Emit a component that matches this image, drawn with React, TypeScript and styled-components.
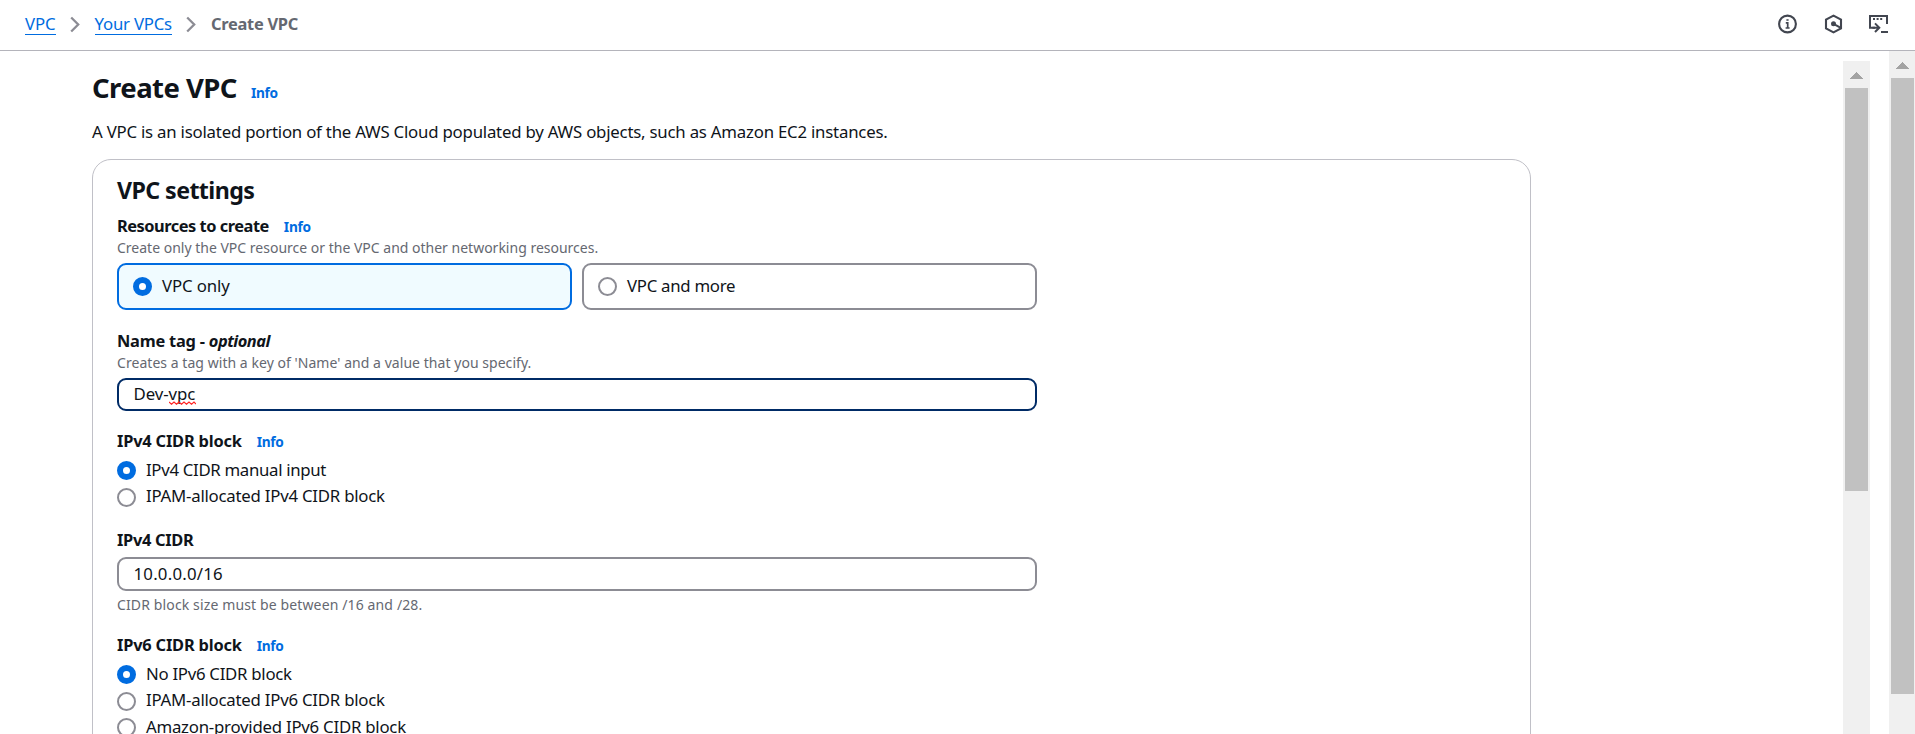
import React from 'react';
import styled, { createGlobalStyle } from 'styled-components';

const GlobalStyle = createGlobalStyle`
  * { box-sizing: border-box; }
  html, body { margin: 0; height: 734px; overflow: hidden; background: #fff; }
  body { font-family: 'Noto Sans', 'Open Sans', sans-serif; color: #0f141a; font-size: 16.8px; line-height: 24px; }
  h1, h2, p { margin: 0; }
`;

interface Spaced {
  $ls?: number;
}

const Page = styled.div`
  width: 1915px;
  height: 734px;
  display: flex;
  flex-direction: column;
  overflow: hidden;
`;

const TopBar = styled.header`
  flex: none;
  height: 51px;
  padding: 0 26px 2px 25px;
  border-bottom: 1px solid #b4b4bb;
  display: flex;
  align-items: center;
  justify-content: space-between;
`;

const Breadcrumbs = styled.nav`
  display: flex;
  align-items: center;
`;

const Crumb = styled.a<Spaced>`
  color: #006ce0;
  line-height: 20px;
  height: 21px;
  border-bottom: 1px solid #006ce0;
  letter-spacing: ${(p) => p.$ls ?? 0}px;
`;

const CurrentCrumb = styled.span`
  color: #656871;
  font-size: 16.4px;
  font-weight: 700;
  line-height: 20px;
  height: 21px;
  letter-spacing: -0.25px;
`;

const Separator = styled.svg`
  flex: none;
  width: 10px;
  height: 17px;
  margin: 0 15px 0 14px;
`;

const Tools = styled.div`
  display: flex;
  align-items: center;
  gap: 26px;
`;

const ToolIcon = styled.svg`
  width: 20px;
  height: 20px;
  display: block;
`;

const Main = styled.main`
  flex: 1;
  min-height: 0;
  display: flex;
`;

const Content = styled.section`
  width: 1843px;
  padding: 19px 0 0 92px;
  overflow: hidden;
`;

const TitleRow = styled.div`
  display: flex;
  align-items: baseline;
  height: 36px;
`;

const Title = styled.h1`
  font-size: 27.5px;
  line-height: 36px;
  font-weight: 700;
  letter-spacing: -0.55px;
  margin-right: 14px;
`;

const InfoLink = styled.a`
  color: #006ce0;
  font-size: 13.7px;
  line-height: 20px;
  font-weight: 700;
  letter-spacing: -0.3px;
`;

const Description = styled.p`
  margin-top: 14px;
  letter-spacing: -0.212px;
`;

const Card = styled.div`
  width: 1439px;
  height: 700px;
  margin-top: 15px;
  padding: 15px 24px;
  border: 1px solid #c0c0c7;
  border-radius: 19px;
`;

const CardTitle = styled.h2`
  font-size: 23.2px;
  line-height: 30px;
  font-weight: 700;
  letter-spacing: -0.58px;
  margin-bottom: 9px;
`;

const Field = styled.div<{ $gap: number }>`
  width: 920px;
  margin-bottom: ${(p) => p.$gap}px;
`;

const LabelRow = styled.div`
  display: flex;
  align-items: baseline;
  gap: 15px;
  height: 24px;
`;

const Label = styled.span<Spaced>`
  font-size: 16.4px;
  font-weight: 700;
  letter-spacing: ${(p) => p.$ls ?? 0}px;
  white-space: pre;
`;

const Optional = styled.i`
  letter-spacing: -0.5px;
`;

const Hint = styled.p<Spaced & { $top?: number }>`
  margin-top: ${(p) => p.$top ?? 0}px;
  color: #656871;
  font-size: 14px;
  line-height: 20px;
  letter-spacing: ${(p) => p.$ls ?? 0}px;
`;

const Tiles = styled.div`
  display: grid;
  grid-template-columns: 1fr 1fr;
  gap: 10px;
  margin-top: 5px;
`;

const Tile = styled.label<{ $selected?: boolean }>`
  height: 47px;
  display: flex;
  align-items: flex-start;
  gap: 10px;
  padding: 9px 14px 0;
  border: 2px solid ${(p) => (p.$selected ? '#006ce0' : '#8c8c94')};
  border-radius: 9px;
  background: ${(p) => (p.$selected ? '#f0fbff' : '#fff')};
`;

const Dot = styled.span<{ $selected?: boolean; $drop: number }>`
  flex: none;
  width: 19px;
  height: 19px;
  margin-top: ${(p) => p.$drop}px;
  border-radius: 50%;
  background: #fff;
  border: ${(p) => (p.$selected ? '6px solid #006ce0' : '2px solid #8c8c94')};
`;

const Text = styled.span<Spaced>`
  letter-spacing: ${(p) => p.$ls ?? 0}px;
`;

const TextBox = styled.div<{ $focused?: boolean; $height: number; $top: number }>`
  height: ${(p) => p.$height}px;
  margin-top: ${(p) => p.$top}px;
  padding: ${(p) => (p.$focused ? 2 : 3)}px 14.5px 0;
  border: 2px solid ${(p) => (p.$focused ? '#002b66' : '#8c8c94')};
  border-radius: 9px;
`;

const Misspelled = styled.span`
  position: relative;
  display: inline-block;
`;

const Squiggle = styled.svg`
  position: absolute;
  left: 0;
  bottom: 1px;
  width: 27px;
  height: 4px;
`;

const Options = styled.div`
  margin-top: 5px;
`;

const Option = styled.label`
  height: 26px;
  display: flex;
  align-items: flex-start;
  gap: 10px;
  & + &:nth-child(3) { margin-top: 1px; }
`;

const Gutter = styled.div`
  width: 19px;
`;

const Track = styled.div<{ $width: number; $top: number; $side: number }>`
  flex: none;
  width: ${(p) => p.$width}px;
  margin-top: ${(p) => p.$top}px;
  padding: 11px ${(p) => p.$side}px 0 2px;
  background: #f0f0f0;
  display: flex;
  flex-direction: column;
  align-items: center;
`;

const Arrow = styled.svg`
  flex: none;
  width: 13px;
  height: 7px;
  margin-bottom: 9px;
`;

const Thumb = styled.div<{ $height: number }>`
  flex: none;
  align-self: stretch;
  height: ${(p) => p.$height}px;
  background: #c1c1c1;
`;

const Chevron = () => (
  <Separator viewBox="0 0 10 17" fill="none" stroke="#8c8c94" strokeWidth="2.3">
    <path d="M1.2 1.5 8.2 8.5 1.2 15.5" />
  </Separator>
);

interface ScrollbarProps {
  width: number;
  top: number;
  side: number;
  thumb: number;
}

const Scrollbar = ({ width, top, side, thumb }: ScrollbarProps) => (
  <Track $width={width} $top={top} $side={side}>
    <Arrow viewBox="0 0 13 7" shapeRendering="crispEdges">
      <path d="M6.5 0 13 7H0Z" fill="#a3a3a3" />
    </Arrow>
    <Thumb $height={thumb} />
  </Track>
);

interface RadioProps {
  text: string;
  ls: number;
  drop: number;
  selected?: boolean;
}

const Radio = ({ text, ls, drop, selected }: RadioProps) => (
  <Option>
    <Dot $selected={selected} $drop={drop} />
    <Text $ls={ls}>{text}</Text>
  </Option>
);

export default function App() {
  return (
    <Page>
      <GlobalStyle />
      <TopBar>
        <Breadcrumbs>
          <Crumb $ls={-0.1}>VPC</Crumb>
          <Chevron />
          <Crumb $ls={-0.22}>Your VPCs</Crumb>
          <Chevron />
          <CurrentCrumb>Create VPC</CurrentCrumb>
        </Breadcrumbs>
        <Tools>
          <ToolIcon viewBox="0 0 20 20" fill="none" stroke="#424650" strokeWidth="2.1">
            <circle cx="10.5" cy="10" r="8.4" />
            <path d="M8.8 8.9H10.7V14.4M8.6 14H12.6M9.4 6H11.6" strokeWidth="1.7" />
          </ToolIcon>
          <ToolIcon viewBox="0 0 20 20" fill="none" stroke="#424650" strokeWidth="2.1">
            <path d="M10.5 1.6 18 5.7V14.3L10.5 18.4 3 14.3V5.7Z" />
            <circle cx="10.5" cy="9.8" r="2.5" fill="#424650" stroke="none" />
            <path d="M10.5 9.8 17.4 13.6" />
          </ToolIcon>
          <ToolIcon viewBox="0 0 20 20" fill="none" stroke="#424650" strokeWidth="2">
            <path d="M6 13.7H1V2H18V10" />
            <path d="M4 5.1H6M7.6 5.1H9.6M11.2 5.1H13.2" />
            <path d="M3.5 13.7H9.5M6 9.4 10.3 13.7 6 18" />
            <path d="M12 18H19" />
          </ToolIcon>
        </Tools>
      </TopBar>
      <Main>
        <Content>
          <TitleRow>
            <Title>Create VPC</Title>
            <InfoLink>Info</InfoLink>
          </TitleRow>
          <Description>
            A VPC is an isolated portion of the AWS Cloud populated by AWS objects, such as Amazon EC2 instances.
          </Description>
          <Card>
            <CardTitle>VPC settings</CardTitle>
            <Field $gap={19}>
              <LabelRow>
                <Label $ls={-0.48}>Resources to create</Label>
                <InfoLink>Info</InfoLink>
              </LabelRow>
              <Hint>Create only the VPC resource or the VPC and other networking resources.</Hint>
              <Tiles>
                <Tile $selected>
                  <Dot $selected $drop={3} />
                  <Text $ls={-0.1}>VPC only</Text>
                </Tile>
                <Tile>
                  <Dot $drop={3} />
                  <Text $ls={-0.28}>VPC and more</Text>
                </Tile>
              </Tiles>
            </Field>
            <Field $gap={18}>
              <LabelRow>
                <Label $ls={-0.22}>
                  Name tag - <Optional>optional</Optional>
                </Label>
              </LabelRow>
              <Hint $ls={0.045}>Creates a tag with a key of 'Name' and a value that you specify.</Hint>
              <TextBox $focused $height={33} $top={5}>
                <Text $ls={-0.08}>
                  Dev-
                  <Misspelled>
                    vpc
                    <Squiggle viewBox="0 0 27 4" fill="none" stroke="#f22" strokeWidth="1.1">
                      <path d="M0 1 2.5 3.2 5 1 7.5 3.2 10 1 12.5 3.2 15 1 17.5 3.2 20 1 22.5 3.2 25 1 27 3" />
                    </Squiggle>
                  </Misspelled>
                </Text>
              </TextBox>
            </Field>
            <Field $gap={18}>
              <LabelRow>
                <Label $ls={-0.19}>IPv4 CIDR block</Label>
                <InfoLink>Info</InfoLink>
              </LabelRow>
              <Options>
                <Radio text="IPv4 CIDR manual input" ls={-0.32} drop={3} selected />
                <Radio text="IPAM-allocated IPv4 CIDR block" ls={-0.23} drop={4} />
              </Options>
            </Field>
            <Field $gap={18}>
              <LabelRow>
                <Label $ls={-0.3}>IPv4 CIDR</Label>
              </LabelRow>
              <TextBox $height={34} $top={5}>
                <Text $ls={0.217}>10.0.0.0/16</Text>
              </TextBox>
              <Hint $ls={0.13} $top={4}>
                CIDR block size must be between /16 and /28.
              </Hint>
            </Field>
            <Field $gap={0}>
              <LabelRow>
                <Label $ls={-0.19}>IPv6 CIDR block</Label>
                <InfoLink>Info</InfoLink>
              </LabelRow>
              <Options>
                <Radio text="No IPv6 CIDR block" ls={-0.28} drop={3} selected />
                <Radio text="IPAM-allocated IPv6 CIDR block" ls={-0.23} drop={4} />
                <Radio text="Amazon-provided IPv6 CIDR block" ls={-0.235} drop={3} />
              </Options>
            </Field>
          </Card>
        </Content>
        <Scrollbar width={27} top={10} side={2} thumb={403} />
        <Gutter />
        <Scrollbar width={26} top={0} side={1} thumb={616} />
      </Main>
    </Page>
  );
}
